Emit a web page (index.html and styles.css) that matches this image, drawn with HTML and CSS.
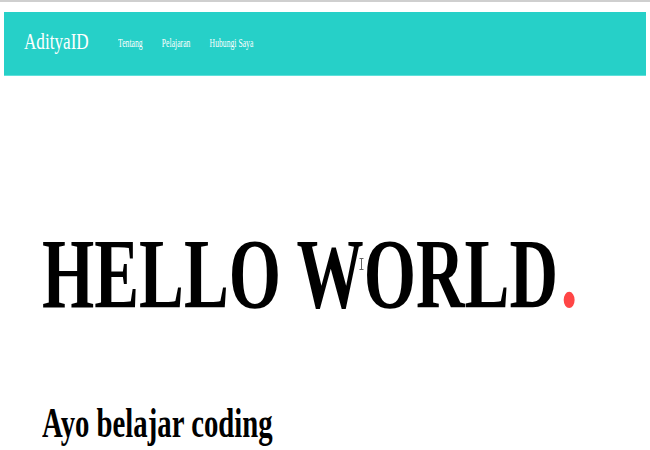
FILE: index.html
```html
<!DOCTYPE html>
<html lang="id">
<head>
<meta charset="utf-8">
<title>AdityaID</title>
<link rel="stylesheet" href="styles.css">
</head>
<body>
<div class="topline"></div>
<nav class="navbar">
  <div class="brand"><span class="squeeze brand-text">AdityaID</span></div>
  <ul class="menu">
    <li><a href="#">Tentang</a></li>
    <li><a href="#">Pelajaran</a></li>
    <li><a href="#">Hubungi Saya</a></li>
  </ul>
</nav>
<main class="hero">
  <h1 class="title"><span class="squeeze title-text">HELLO WORLD<span class="dot">.</span></span></h1>
  <h2 class="subtitle"><span class="squeeze subtitle-text">Ayo belajar coding</span></h2>
  <svg class="cursor" width="5" height="12" viewBox="0 0 5 12"><path d="M0.5 0.5h4M0.5 11.5h4M2.5 0.5v11" stroke="#666" stroke-width="1" fill="none"/></svg>
</main>
</body>
</html>
```
FILE: styles.css
```css
html, body {
  margin: 0;
  padding: 0;
  background: #fff;
}
body {
  font-family: "Liberation Serif", "Times New Roman", serif;
  color: #000;
  width: 650px;
  height: 450px;
  overflow: hidden;
}
.topline {
  height: 2px;
  background: #cfcfcf;
}
.navbar {
  margin: 10px 4px 0;
  height: 64px;
  background: #26d0c8;
  border-bottom: 1px solid #5fe0da;
  box-sizing: border-box;
  display: flex;
  align-items: center;
  padding-left: 20px;
}
.squeeze {
  display: inline-block;
  transform-origin: left center;
  white-space: nowrap;
}
.brand {
  width: 94px;
  flex: none;
  margin-top: -3px;
}
.brand-text {
  font-size: 23px;
  color: #fff;
  transform: scaleX(0.745);
  margin-right: -23px;
}
.menu {
  list-style: none;
  margin: -3px 0 0;
  padding: 0;
  display: flex;
  gap: 30px;
  transform-origin: left center;
  transform: scaleX(0.64);
}
.menu a {
  color: #fff;
  text-decoration: none;
  font-size: 12px;
}
.hero {
  position: relative;
  padding-left: 42px;
}
.title {
  margin: 148px 0 0;
  font-size: 100px;
  line-height: 1;
  font-weight: bold;
}
.title-text {
  transform: scaleX(0.672);
  margin-right: -270px;
}
.dot {
  color: #ff4646;
  margin-left: 4px;
}
.subtitle {
  margin: 78px 0 0;
  font-size: 42px;
  line-height: 1;
  font-weight: bold;
}
.subtitle-text {
  transform: scaleX(0.685);
  margin-right: -110px;
}
.cursor {
  position: absolute;
  left: 359px;
  top: 34px;
}
```
